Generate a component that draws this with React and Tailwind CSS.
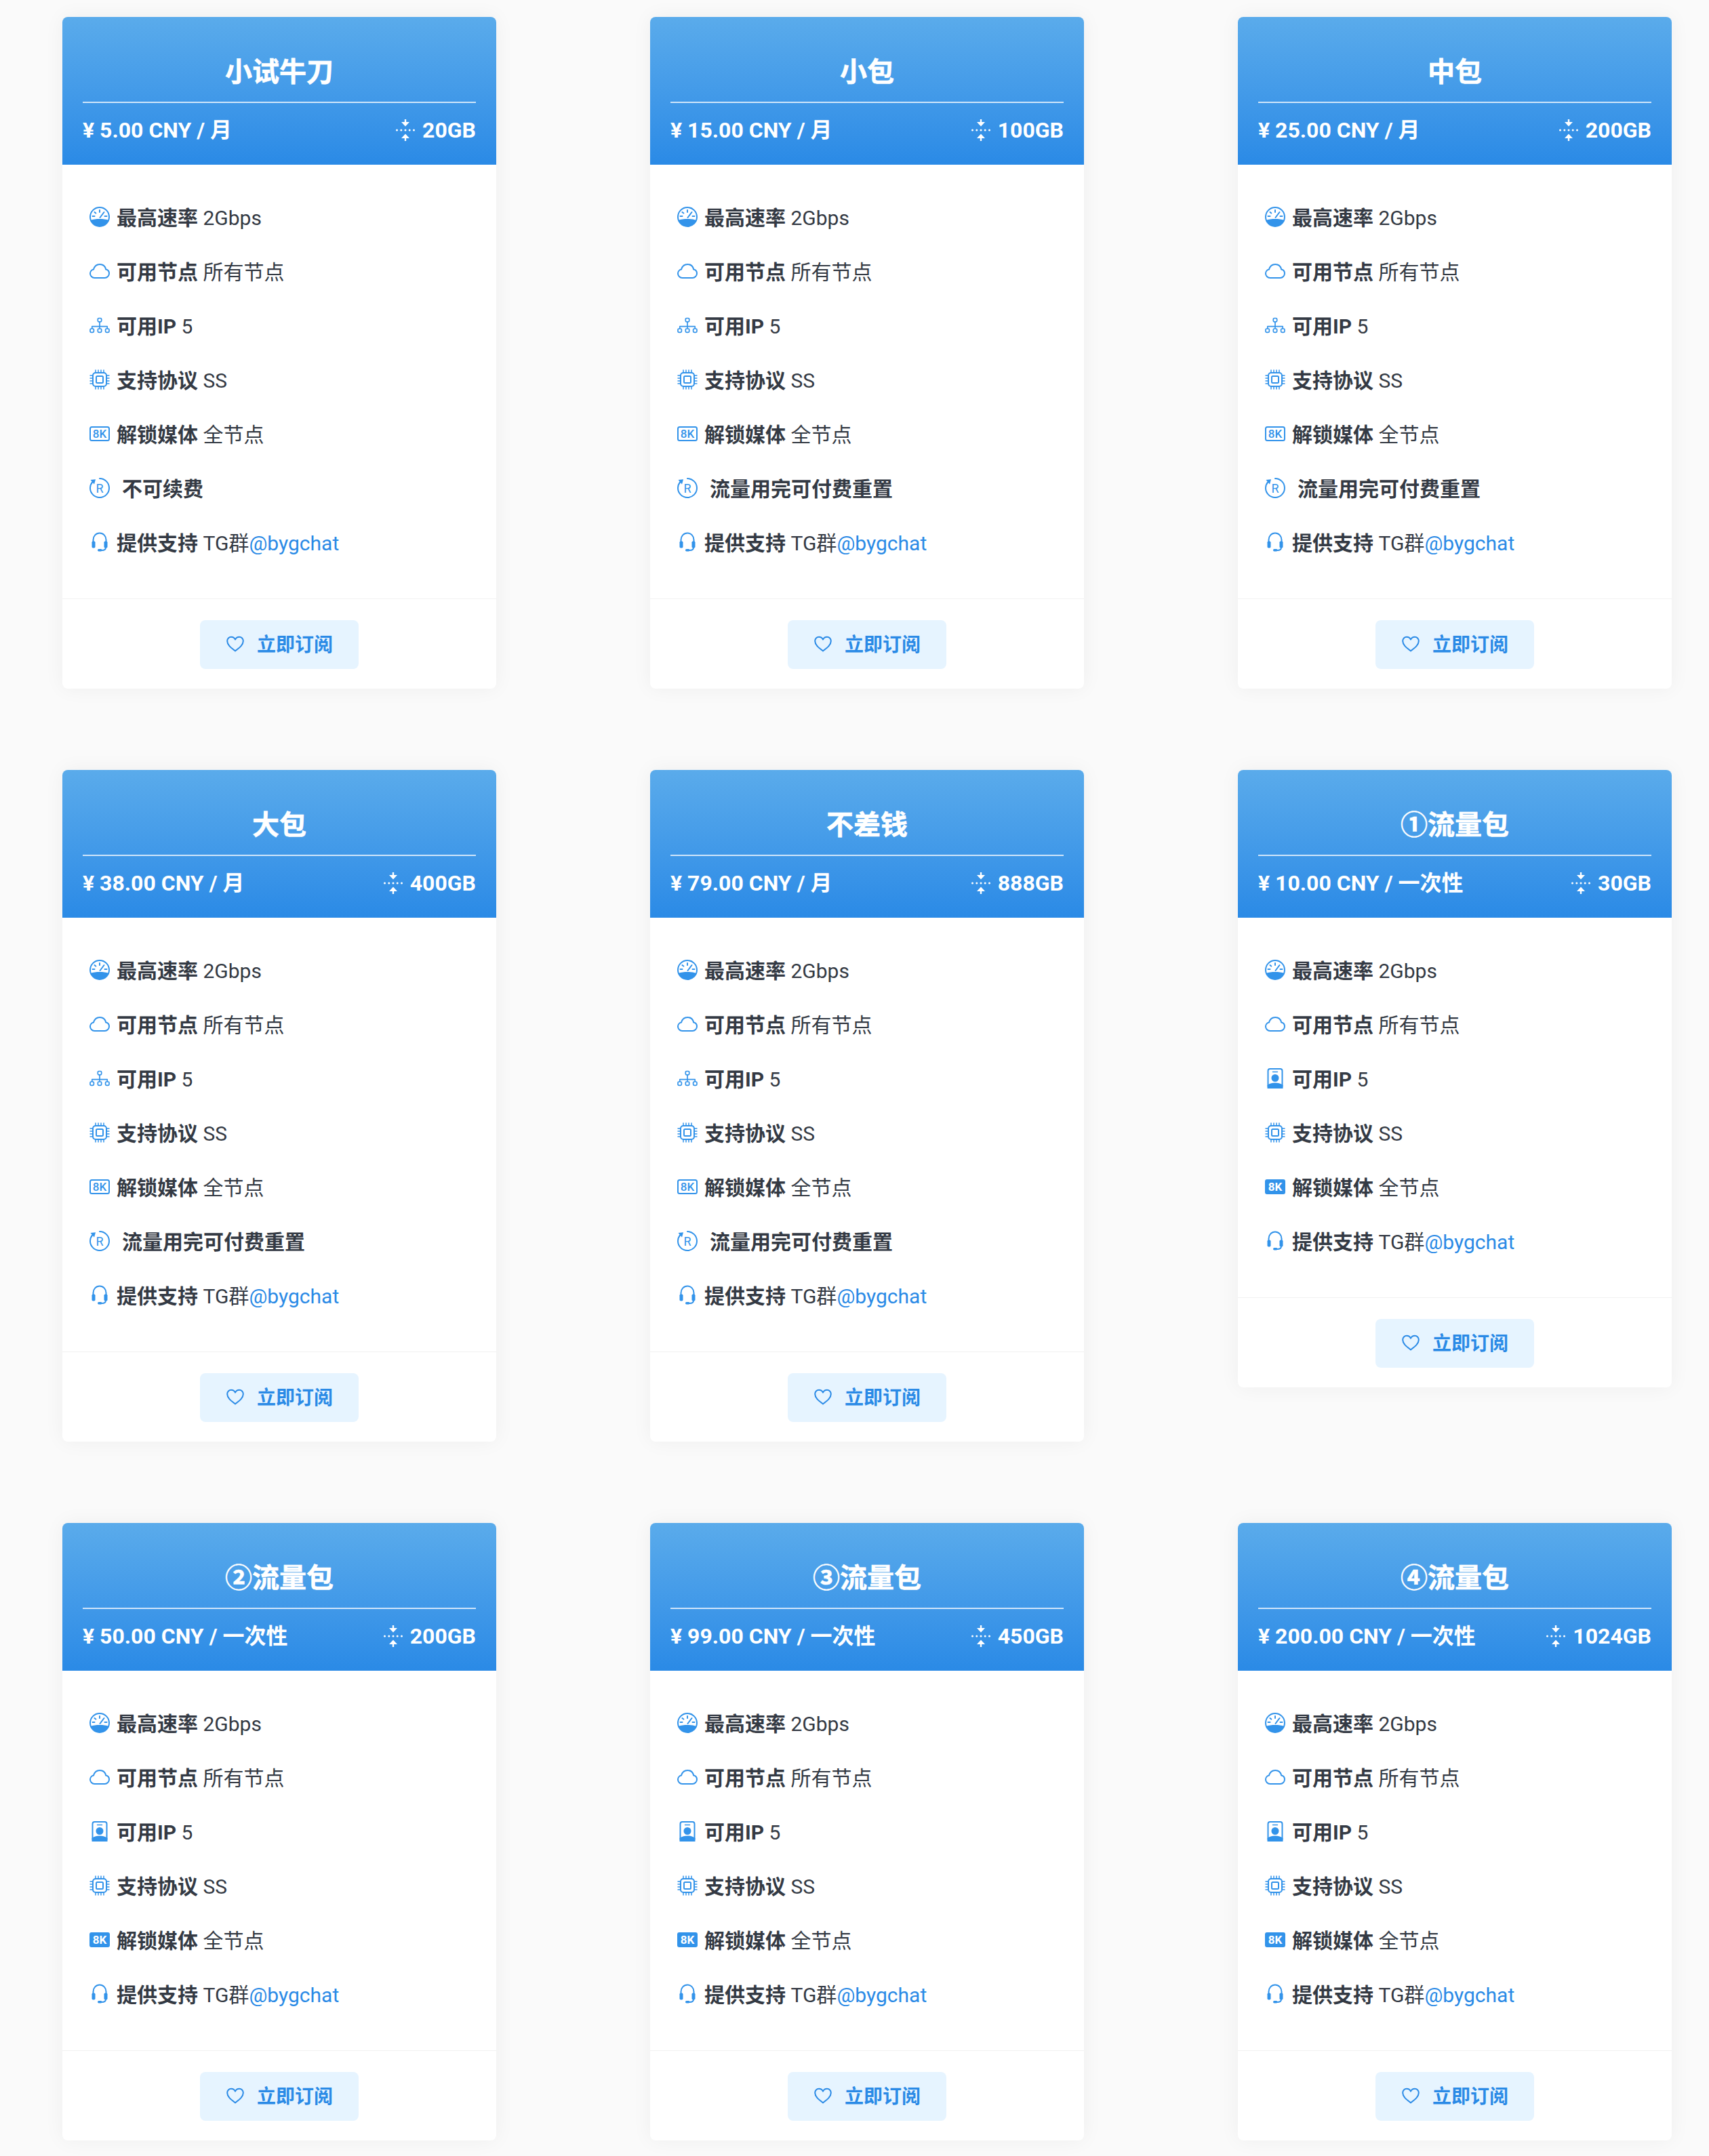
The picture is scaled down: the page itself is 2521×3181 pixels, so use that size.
import React from "react";

const S = ({ children, className = "w-[30px] h-[30px]" }) => (
  <svg viewBox="0 0 30 30" className={`${className} -mt-[4px] shrink-0 text-[#3293ea]`} fill="none" stroke="currentColor" strokeWidth="2" strokeLinecap="round" strokeLinejoin="round">
    {children}
  </svg>
);

const Gauge = () => (
  <S>
    <circle cx="15" cy="15" r="14" />
    <path d="M1.500 20C5.500 18.500 10 18 15 18s9.500.5 13.500 2C26.500 25.800 21 29 15 29S3.500 25.800 1.500 20z" fill="currentColor" stroke="none" />
    <path d="M15 5v3M7.500 8l1.800 1.500M4.500 14h3M22.500 14h3M15.500 16l6-8" />
  </S>
);
const Cloud = () => (
  <S>
    <path d="M7.500 25C3.800 25 1 22 1 18.500c0-3 2.200-5.500 5-6C7.300 8 10.800 5 15.200 5c4.500 0 8 3 9 7.500C27 13 29 15.500 29 18.500 29 22 26 25 22.500 25z" />
  </S>
);
const Tree = () => (
  <svg viewBox="0 0 30 30" className="w-[30px] h-[30px] -mt-[4px] shrink-0 text-[#3293ea]" fill="none" stroke="currentColor" strokeWidth="1.700" strokeLinecap="round" strokeLinejoin="round">
    <rect x="12.300" y="4.500" width="5.400" height="5.400" rx="1.600" />
    <path d="M15 10v9M3.800 19.500v-2.800h22.400v2.800" />
    <rect x="1" y="20" width="5.400" height="5.400" rx="1.600" />
    <rect x="12.300" y="20" width="5.400" height="5.400" rx="1.600" />
    <rect x="23.600" y="20" width="5.400" height="5.400" rx="1.600" />
  </svg>
);
const Badge = () => (
  <S>
    <rect x="4.500" y="1" width="21" height="28" rx="3" />
    <path d="M11.500 5.500h7" strokeWidth="1.500" />
    <circle cx="15" cy="14.500" r="5.500" fill="currentColor" stroke="none" />
    <path d="M3.500 30v-5c4-3 7.500-3.600 11.500-3.600s7.500.6 11.500 3.600v5z" fill="currentColor" stroke="none" />
  </S>
);
const Chip = () => (
  <S>
    <rect x="5" y="5" width="20" height="20" rx="4" />
    <rect x="10" y="10" width="10" height="10" rx="1.500" />
    <path strokeWidth="1.500" strokeLinecap="butt" d="M9 0.500v4M13 0.500v4M17 0.500v4M21 0.500v4M9 25.500v4M13 25.500v4M17 25.500v4M21 25.500v4M0.500 9h4M0.500 13h4M0.500 17h4M0.500 21h4M25.500 9h4M25.500 13h4M25.500 17h4M25.500 21h4" />
  </S>
);
const EightK = () => (
  <S>
    <rect x="1" y="5" width="28" height="20" rx="2.500" />
    <text x="15" y="21" textAnchor="middle" fontFamily="Roboto, sans-serif" fontSize="17" fontWeight="500" fill="currentColor" stroke="none">8K</text>
  </S>
);
const EightKFill = () => (
  <S>
    <rect x="0" y="4" width="30" height="22" rx="3" fill="currentColor" stroke="none" />
    <text x="15" y="21" textAnchor="middle" fontFamily="Roboto, sans-serif" fontSize="17" fontWeight="700" fill="#ffffff" stroke="none">8K</text>
  </S>
);
const Renew = () => (
  <S>
    <path d="M4.500 6A14 14 0 0 0 1 15c0 7.700 6.300 14 14 14s14-6.300 14-14S22.700 1 15 1" />
    <path d="M1.500 3l7.500-.8-2 7.300z" fill="currentColor" stroke="none" />
    <text x="15" y="21.500" textAnchor="middle" fontFamily="Roboto, sans-serif" fontSize="18" fill="currentColor" stroke="none">R</text>
  </S>
);
const Headset = () => (
  <S>
    <path d="M5.500 15v-3.500C5.500 6 9.700 1.500 15 1.500s9.500 4.500 9.500 10V15" />
    <rect x="3.500" y="13.500" width="5" height="10" rx="1.800" fill="currentColor" stroke="none" />
    <rect x="21.500" y="13.500" width="5" height="10" rx="1.800" fill="currentColor" stroke="none" />
    <path d="M24 23c0 3-2.500 4-6 4" />
    <rect x="12" y="25" width="6.500" height="3.500" rx="1.700" fill="currentColor" stroke="none" />
  </S>
);
const Heart = () => (
  <svg viewBox="0 0 28 28" className="w-[28px] h-[28px] -mt-[2px] shrink-0 text-[#2a8ae6]" fill="none" stroke="currentColor" strokeWidth="2" strokeLinejoin="round">
    <path d="M14 24.500C8 19.800 2.200 15.700 2.200 9.800 2.200 6.400 4.800 3.800 8 3.800c2.500 0 4.800 1.400 6 3.800 1.200-2.400 3.500-3.800 6-3.800 3.200 0 5.800 2.600 5.800 6 0 5.900-5.800 10-11.800 14.700z" />
  </svg>
);
const Squeeze = () => (
  <svg viewBox="0 0 28 32" className="w-[28px] h-[32px] shrink-0" fill="#ffffff" stroke="none">
    <path d="M12.800 0h2.400v4H20l-6 6.500L8 4h4.800zM12.800 32h2.400v-4H20l-6-6.500L8 28h4.800z" />
    <circle cx="1.500" cy="16" r="1.500" />
    <circle cx="7.800" cy="16" r="1.500" />
    <circle cx="14" cy="16" r="1.500" />
    <circle cx="20.200" cy="16" r="1.500" />
    <circle cx="26.500" cy="16" r="1.500" />
  </svg>
);

const Row = ({ icon, children }) => (
  <li className="h-[80px] flex items-center gap-[10px]">
    {icon}
    <div className="whitespace-pre">{children}</div>
  </li>
);

const Card = ({ title, price, traffic, renew }) => {
  const once = !renew;
  return (
    <div className="w-[640px] bg-white rounded-[8px] shadow-[0_0_30px_rgba(0,0,0,0.05)] overflow-hidden">
      <div className="h-[218px] px-[30px] text-white bg-gradient-to-b from-[#5aabeb] to-[#2a8ae6] flex flex-col">
        <div className="h-[127px] border-b-2 border-[#cfe5fa] flex items-center justify-center pt-[39px] text-[40px] font-bold leading-none [-webkit-text-stroke:0.6px_#ffffff]">{title}</div>
        <div className="flex-1 flex items-center justify-between pb-[11px] text-[32px] font-bold leading-none">
          <span>{price}</span>
          <span className="flex items-center gap-[11px]"><Squeeze />{traffic}</span>
        </div>
      </div>
      <ul className="pl-[40px] pt-[39px] pb-[41px] text-[30px] leading-[40px] text-[#343a44]">
        <Row icon={<Gauge />}><b className="font-bold">最高速率</b> 2Gbps</Row>
        <Row icon={<Cloud />}><b className="font-bold">可用节点</b> 所有节点</Row>
        <Row icon={once ? <Badge /> : <Tree />}><b className="font-bold">可用IP</b> 5</Row>
        <Row icon={<Chip />}><b className="font-bold">支持协议</b> SS</Row>
        <Row icon={once ? <EightKFill /> : <EightK />}><b className="font-bold">解锁媒体</b> 全节点</Row>
        {renew && <Row icon={<Renew />}><b className="font-bold ml-[8px]">{renew}</b></Row>}
        <Row icon={<Headset />}><b className="font-bold">提供支持</b> TG群<span className="text-[#2a8ae6]">@bygchat</span></Row>
      </ul>
      <div className="border-t border-[#f2f2f2] h-[133px] pt-[2px] flex items-center justify-center">
        <div className="w-[234px] h-[72px] rounded-[8px] bg-[#e6f4ff] flex items-center justify-center gap-[18px] text-[28px] font-bold text-[#2a8ae6]">
          <Heart /><span className="pt-[2px]">立即订阅</span>
        </div>
      </div>
    </div>
  );
};

const reset = "流量用完可付费重置";
const plans = [
  { title: "小试牛刀", price: "¥ 5.00 CNY / 月", traffic: "20GB", renew: "不可续费" },
  { title: "小包", price: "¥ 15.00 CNY / 月", traffic: "100GB", renew: reset },
  { title: "中包", price: "¥ 25.00 CNY / 月", traffic: "200GB", renew: reset },
  { title: "大包", price: "¥ 38.00 CNY / 月", traffic: "400GB", renew: reset },
  { title: "不差钱", price: "¥ 79.00 CNY / 月", traffic: "888GB", renew: reset },
  { title: "①流量包", price: "¥ 10.00 CNY / 一次性", traffic: "30GB" },
  { title: "②流量包", price: "¥ 50.00 CNY / 一次性", traffic: "200GB" },
  { title: "③流量包", price: "¥ 99.00 CNY / 一次性", traffic: "450GB" },
  { title: "④流量包", price: "¥ 200.00 CNY / 一次性", traffic: "1024GB" },
];

export default function App() {
  return (
    <div className="min-h-[3181px] bg-[#fafafa] pt-[25px] pl-[92px] font-['Roboto','Noto_Sans_CJK_SC',sans-serif]">
      <div className="grid grid-cols-[repeat(3,640px)] gap-x-[227px] gap-y-[120px] items-start">
        {plans.map((p) => <Card key={p.title} {...p} />)}
      </div>
    </div>
  );
}
